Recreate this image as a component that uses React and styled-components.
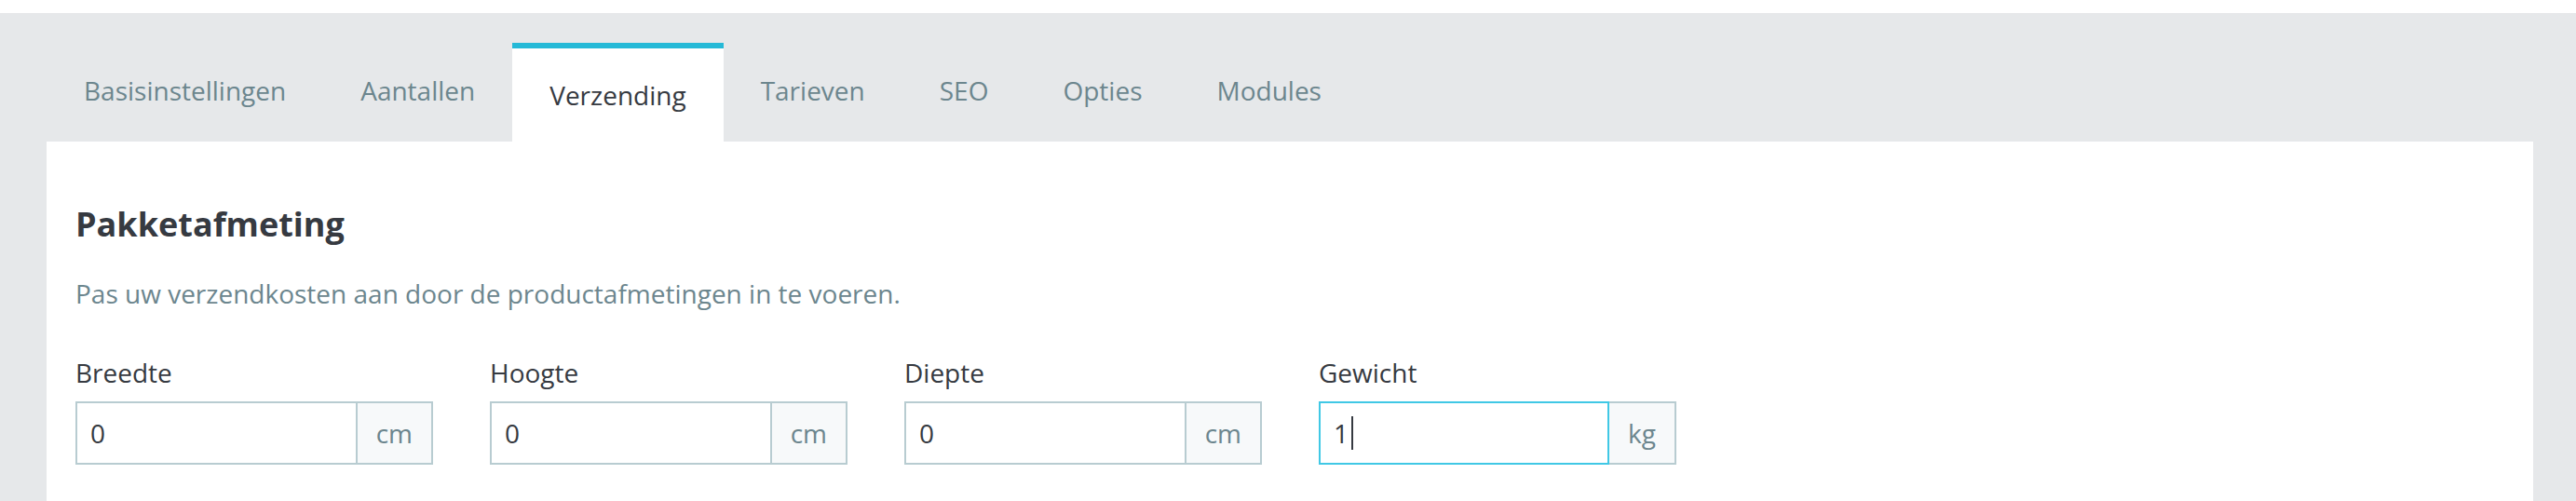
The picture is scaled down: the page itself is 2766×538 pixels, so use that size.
import React from "react";
import styled, { createGlobalStyle } from "styled-components";

const GlobalStyle = createGlobalStyle`
  html, body {
    margin: 0;
    padding: 0;
    background: #fff;
    font-family: "Open Sans", "Liberation Sans", sans-serif;
  }
  * {
    box-sizing: border-box;
  }
`;

const tabs = ["Basisinstellingen", "Aantallen", "Verzending", "Tarieven", "SEO", "Opties", "Modules"];

const fields = [
  { label: "Breedte", value: "0", unit: "cm" },
  { label: "Hoogte", value: "0", unit: "cm" },
  { label: "Diepte", value: "0", unit: "cm" },
  { label: "Gewicht", value: "1", unit: "kg", focused: true },
];

const App = () => {
  return (
    <>
      <GlobalStyle />
      <Page>
        <TabBar>
          {tabs.map((tab) => (
            <Tab key={tab} $active={tab === "Verzending"}>
              {tab}
            </Tab>
          ))}
        </TabBar>
        <Card>
          <Heading>Pakketafmeting</Heading>
          <Description>Pas uw verzendkosten aan door de productafmetingen in te voeren.</Description>
          <FieldRow>
            {fields.map((f) => (
              <Field key={f.label}>
                <Label>{f.label}</Label>
                <InputGroup>
                  <InputBox $focused={f.focused}>
                    {f.value}
                    {f.focused && <Caret />}
                  </InputBox>
                  <Addon>{f.unit}</Addon>
                </InputGroup>
              </Field>
            ))}
          </FieldRow>
        </Card>
      </Page>
    </>
  );
};

const Page = styled.div`
  margin-top: 14px;
  min-height: calc(100vh - 14px);
  background: #e6e8ea;
  padding: 32px 46px 0 50px;
  display: flex;
  flex-direction: column;
`;

const TabBar = styled.div`
  display: flex;
  align-items: flex-end;
`;

const Tab = styled.div`
  font-size: 28px;
  line-height: 40px;
  padding: ${(p) => (p.$active ? "30px 40px 30px" : "25px 40px 35px")};
  border-top: 6px solid ${(p) => (p.$active ? "#25b9d7" : "transparent")};
  background: ${(p) => (p.$active ? "#fff" : "transparent")};
  color: ${(p) => (p.$active ? "#363a41" : "#6c868e")};
  white-space: nowrap;
  cursor: pointer;
`;

const Card = styled.div`
  flex: 1;
  background: #fff;
  padding: 67px 31px 40px;
`;

const Heading = styled.h2`
  margin: 0;
  font-size: 36px;
  line-height: 44px;
  font-weight: 700;
  color: #363a41;
`;

const Description = styled.p`
  margin: 32px 0 0;
  font-size: 28px;
  line-height: 40px;
  color: #6c868e;
`;

const FieldRow = styled.div`
  display: flex;
  gap: 61px;
  margin-top: 45px;
`;

const Field = styled.div`
  width: 384px;
`;

const Label = styled.div`
  font-size: 28px;
  line-height: 40px;
  color: #363a41;
  margin-bottom: 11px;
`;

const InputGroup = styled.div`
  display: flex;
  height: 68px;
`;

const InputBox = styled.div`
  flex: 1;
  display: flex;
  align-items: center;
  padding: 0 14px;
  border: 2px solid ${(p) => (p.$focused ? "#40c8e5" : "#b8ccd1")};
  font-size: 28px;
  color: #363a41;
`;

const Caret = styled.span`
  display: inline-block;
  width: 2px;
  height: 36px;
  margin-left: 3px;
  background: #363a41;
`;

const Addon = styled.div`
  display: flex;
  align-items: center;
  padding: 0 20px;
  background: #f7f9fa;
  border: 2px solid #b8ccd1;
  border-left: none;
  font-size: 28px;
  color: #6c868e;
`;

export default App;
